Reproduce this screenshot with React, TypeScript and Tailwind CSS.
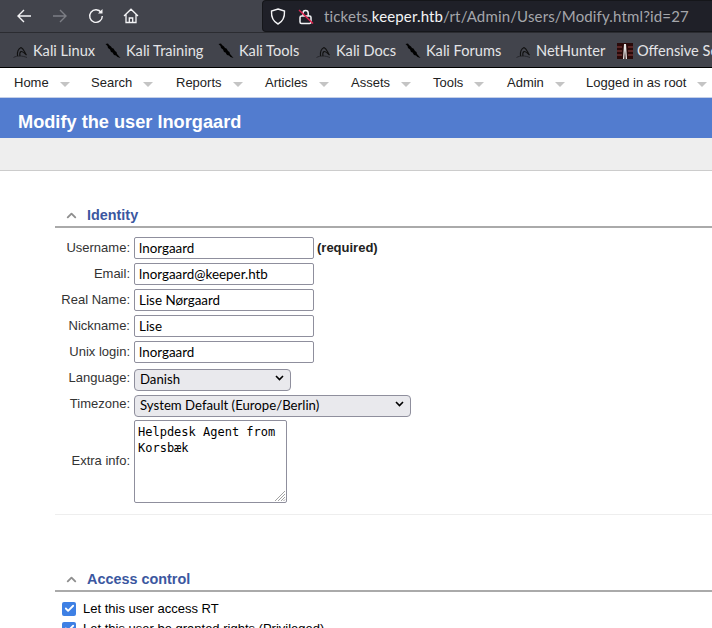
import { ChevronUp, Check } from "lucide-react";

const NAV_ITEMS = [
  { label: "Home", width: "w-[77px]" },
  { label: "Search", width: "w-[85px]" },
  { label: "Reports", width: "w-[89px]" },
  { label: "Articles", width: "w-[86px]" },
  { label: "Assets", width: "w-[82px]" },
  { label: "Tools", width: "w-[74px]" },
  { label: "Admin", width: "w-[79px]" },
  { label: "Logged in as root", width: "w-[130px]" },
];

const TEXT_FIELDS = [
  { label: "Username:", value: "lnorgaard", note: "(required)" },
  { label: "Email:", value: "lnorgaard@keeper.htb" },
  { label: "Real Name:", value: "Lise Nørgaard" },
  { label: "Nickname:", value: "Lise" },
  { label: "Unix login:", value: "lnorgaard" },
];

const BOOKMARKS = [
  { label: "Kali Linux", icon: "kali", width: "w-[92px]" },
  { label: "Kali Training", icon: "dragon", width: "w-[113px]" },
  { label: "Kali Tools", icon: "dragon", width: "w-[98px]" },
  { label: "Kali Docs", icon: "kali", width: "w-[89px]" },
  { label: "Kali Forums", icon: "dragon", width: "w-[111px]" },
  { label: "NetHunter", icon: "kali", width: "w-[101px]" },
  { label: "Offensive Security", icon: "offsec", width: "w-[130px]" },
];

function BookmarkIcon({ kind }: { kind: string }) {
  if (kind === "dragon") {
    return (
      <svg width="17" height="16" viewBox="0 0 17 16" className="shrink-0">
        <path d="M0.5 1 L3 0.5 L4 2 L6 3.5 L7 5 L8.5 5.5 L10 8 L11.5 9 L12 11 L15.5 15 L12.5 14 L11 12.5 L9 12 L7.5 9.5 L6 9 L5 6.5 L3 5 L2.5 3 Z" fill="#000" />
      </svg>
    );
  }
  if (kind === "offsec") {
    return (
      <svg width="16" height="16" viewBox="0 0 16 16" className="shrink-0">
        <rect width="16" height="16" fill="#2a0a0a" />
        <path d="M0 4h5M0 8h5M0 12h5M11 4h5M11 8h5M11 12h5" stroke="#8a4040" strokeWidth="1" />
        <path d="M6 16 L7 1 H9 L10 16 H8.7 L8 6 L7.3 16 Z" fill="#e8e8e8" />
      </svg>
    );
  }
  return (
    <svg width="16" height="16" viewBox="0 0 16 16" fill="none" className="shrink-0">
      <path d="M0.5 14.5 C4 12.5 9 12.5 14 14.5" stroke="#26272c" strokeWidth="1" />
      <path d="M4.5 13 C4 9 5 6 8 4.5 C10.5 5.5 11.5 9 13.5 12 C11 9.5 9.5 8 8 8.5 C6.5 9.5 6.5 11 7 13" stroke="#111" strokeWidth="1.1" />
    </svg>
  );
}

function BrowserChrome() {
  const iconStroke = "#f4f4f6";
  return (
    <header className="border-b border-black bg-[#42444c] font-['Lato',sans-serif]">
      <div className="flex h-[33px] items-center border-b border-[#2b2c31]">
        <svg width="16" height="16" viewBox="0 0 16 16" fill="none" className="ml-[16px]">
          <path d="M15 8H2M8 2 L2 8 L8 14" stroke={iconStroke} strokeWidth="1.4" />
        </svg>
        <svg width="16" height="16" viewBox="0 0 16 16" fill="none" className="ml-[20px]">
          <path d="M1 8H14M8 2 L14 8 L8 14" stroke="#7c7e85" strokeWidth="1.4" />
        </svg>
        <svg width="16" height="16" viewBox="0 0 16 16" fill="none" className="ml-[20px]">
          <path d="M13.2 4.5A6.3 6.3 0 1 0 14.3 8" stroke={iconStroke} strokeWidth="1.4" />
          <path d="M14.5 1V5.5H10Z" fill={iconStroke} />
        </svg>
        <svg width="16" height="16" viewBox="0 0 16 16" fill="none" className="ml-[19px]">
          <path d="M1 8 L8 1.2 L15 8M3 6.5V14.5H13V6.5M6.3 14.5V10H9.7V14.5" stroke={iconStroke} strokeWidth="1.3" />
        </svg>
        <div className="ml-[123px] flex h-[32px] flex-1 items-center rounded-l-[4px] border border-r-0 border-[#15161a] bg-[#1f2028] pl-[7px] text-[15px]">
          <svg width="16" height="17" viewBox="0 0 16 17" fill="none">
            <path d="M8 1 L14.5 3 C14.8 9 13 13.5 8 16 C3 13.5 1.2 9 1.5 3 Z" stroke={iconStroke} strokeWidth="1.4" />
          </svg>
          <svg width="16" height="17" viewBox="0 0 16 17" fill="none" className="ml-[12px]">
            <rect x="2" y="8" width="11" height="7.5" rx="1.5" stroke={iconStroke} strokeWidth="1.5" />
            <path d="M5 8V5a2.6 2.6 0 0 1 5.2 0v3" stroke={iconStroke} strokeWidth="1.5" />
            <path d="M1 2 L15 15.5" stroke="#e0224e" strokeWidth="1.5" />
          </svg>
          <span className="ml-[10px] whitespace-nowrap tracking-[0.15px] text-[#a5a6ab]">
            tickets.<span className="text-[#f4f4f6]">keeper.htb</span>/rt/Admin/Users/Modify.html?id=27
          </span>
        </div>
      </div>
      <div className="flex h-[34px] items-center overflow-hidden pl-[13px] pt-[2px] text-[14.6px] text-[#e4e4e7]">
        {BOOKMARKS.map((bookmark) => (
          <div key={bookmark.label} className={`flex shrink-0 items-center gap-[4px] whitespace-nowrap ${bookmark.width}`}>
            <BookmarkIcon kind={bookmark.icon} />
            <span>{bookmark.label}</span>
          </div>
        ))}
      </div>
    </header>
  );
}

function SectionTitle({ title }: { title: string }) {
  return (
    <div className="flex h-[23px] items-center border-b-2 border-[#aaaaaa] pl-[9px]">
      <ChevronUp size={15} strokeWidth={3} className="text-[#8f8f8f]" />
      <span className="ml-[8px] text-[14.4px] font-bold text-[#3b57a0]">{title}</span>
    </div>
  );
}

function FakeSelect({ value, width }: { value: string; width: string }) {
  return (
    <div className={`relative h-[22px] ${width}`}>
      <select
        defaultValue={value}
        className="h-full w-full appearance-none rounded-[4px] border border-[#8f8f9d] bg-[#e9e9ed] pb-[2px] pl-[5px] font-['Lato',sans-serif] text-[13.2px] text-black"
      >
        <option>{value}</option>
      </select>
      <svg width="9" height="6" viewBox="0 0 9 6" fill="none" className="pointer-events-none absolute right-[7px] top-[8px]">
        <path d="M1 1 L4.5 4.5 L8 1" stroke="#000" strokeWidth="1.6" />
      </svg>
    </div>
  );
}

function FormRow({ label, children }: { label: string; children: React.ReactNode }) {
  return (
    <div className="flex items-center">
      <label className="w-[75px] text-right text-[13px] text-[#333]">{label}</label>
      <div className="ml-[4px] flex items-center">{children}</div>
    </div>
  );
}

function CheckRow({ label }: { label: string }) {
  return (
    <div className="flex h-[17px] items-center pl-[7px] text-[13px] text-black">
      <span className="flex h-[14px] w-[14px] items-center justify-center rounded-[2px] bg-[#3e80e4]">
        <Check size={11} strokeWidth={4} className="text-white" />
      </span>
      <span className="ml-[7px] whitespace-nowrap">{label}</span>
    </div>
  );
}

export default function App() {
  return (
    <div className="h-[628px] w-[712px] overflow-hidden bg-white font-['Liberation_Sans',sans-serif]">
      <BrowserChrome />
      <nav className="flex h-[29px] items-center overflow-hidden whitespace-nowrap pl-[14px] text-[13px] text-[#222]">
        {NAV_ITEMS.map((item) => (
          <div key={item.label} className={`flex shrink-0 items-center ${item.width}`}>
            <span>{item.label}</span>
            <span className="ml-[11px] mt-[3px] h-0 w-0 border-x-[5px] border-t-[5px] border-x-transparent border-t-[#c4c4c4]" />
          </div>
        ))}
      </nav>
      <h1 className="flex h-[41px] items-center border-t border-[#c5d0e8] bg-[#527ccf] pl-[18px] pt-[10px] text-[18.2px] font-bold text-white">
        Modify the user lnorgaard
      </h1>
      <div className="h-[33px] border-b border-[#cccccc] bg-[#eeeeee]" />
      <main className="pl-[55px] pt-[34px]">
        <SectionTitle title="Identity" />
        <div className="flex flex-col gap-[4px] border-b border-[#eeeeee] pb-[11px] pt-[9px]">
          {TEXT_FIELDS.map((field) => (
            <FormRow key={field.label} label={field.label}>
              <input
                readOnly
                value={field.value}
                className="h-[22px] w-[180px] rounded-[2px] border border-[#8f8f9d] pl-[4px] font-['Lato',sans-serif] text-[13.4px] text-black"
              />
              {field.note && <b className="ml-[3px] text-[13px] text-[#222]">{field.note}</b>}
            </FormRow>
          ))}
          <FormRow label="Language:">
            <FakeSelect value="Danish" width="w-[157px]" />
          </FormRow>
          <FormRow label="Timezone:">
            <FakeSelect value="System Default (Europe/Berlin)" width="w-[277px]" />
          </FormRow>
          <FormRow label="Extra info:">
            <div className="relative mt-px h-[83px] w-[153px]">
              <textarea
                readOnly
                value={"Helpdesk Agent from Korsbæk"}
                className="h-full w-full resize-none rounded-[2px] border border-[#8f8f9d] px-[3px] py-[3px] font-['DejaVu_Sans_Mono',monospace] text-[12px] leading-[16px] text-black"
              />
              <svg width="12" height="12" viewBox="0 0 12 12" className="pointer-events-none absolute bottom-[1px] right-[1px]">
                <path d="M1 11 L11 1M4 11 L11 4M7 11 L11 7M9.5 11 L11 9.5" stroke="#8a8a8a" strokeWidth="0.8" />
              </svg>
            </div>
          </FormRow>
        </div>
        <div className="mt-[54px]">
          <SectionTitle title="Access control" />
        </div>
        <div className="flex flex-col gap-[3px] pt-[8px]">
          <CheckRow label="Let this user access RT" />
          <CheckRow label="Let this user be granted rights (Privileged)" />
        </div>
      </main>
    </div>
  );
}
